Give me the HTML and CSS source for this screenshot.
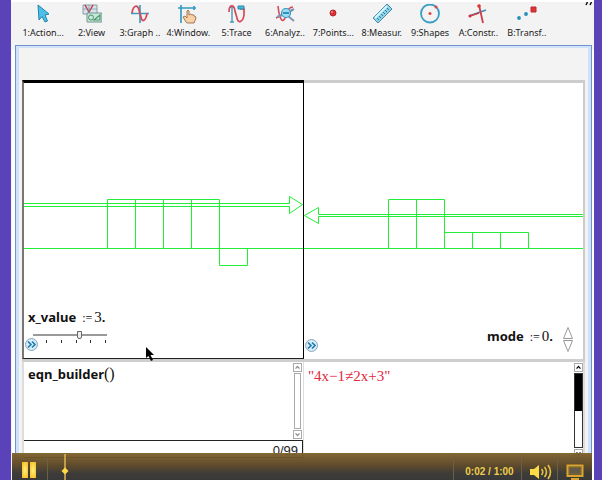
FILE: index.html
```
<!DOCTYPE html>
<html lang="en">
<head>
<meta charset="utf-8">
<title>Equation builder</title>
<link rel="stylesheet" href="styles.css">
</head>
<body>
<div class="app">
  <nav class="toolbar" aria-label="Graph tools">
    <button class="tool"><svg viewBox="0 0 20 20"><path d="M5 1 L6 16 L9 12.500 L12 18 L14.500 17 L12 11 L16 10 Z" fill="#4cc0ea" stroke="#2382a8" stroke-width="1"/></svg><span>1:Action...</span></button>
    <button class="tool"><svg viewBox="0 0 20 20"><path d="M1 1H15V10H1Z" fill="#d6e3e8" stroke="#8a9ca6"/><path d="M3 1L7 8L11 1" fill="none" stroke="#cc3848" stroke-width="1.500"/><path d="M1 5H15M7 1V10" stroke="#7896a8" stroke-width=".7"/><path d="M5 9H20V18H5Z" fill="#c8e6da" stroke="#759595"/><circle cx="9" cy="13.500" r="2.500" fill="none" stroke="#499767"/><path d="M12 16L18 11V16Z" fill="none" stroke="#499767" stroke-width="1.200"/></svg><span>2:View</span></button>
    <button class="tool"><svg viewBox="0 0 20 20"><path d="M1 9.500H19M10 1V19" stroke="#399fc6" stroke-width="1.700"/><path d="M2 9C3 1 8 0 9 6L11 13C12 19 16 17 17 9" fill="none" stroke="#d84957" stroke-width="1.800"/></svg><span>3:Graph ..</span></button>
    <button class="tool"><svg viewBox="0 0 20 20"><path d="M0 4H18M3 1V19M16 2V6" fill="none" stroke="#349cc3" stroke-width="1.700"/><path d="M8 18L5 13L7 12L9 14V7Q10 5 11 7V11Q13 9 14 11Q16 10 16 12Q18 12 18 14L16 19H9Z" fill="#f8d2a6" stroke="#9c6b45" stroke-width=".9"/></svg><span>4:Window.</span></button>
    <button class="tool"><svg viewBox="0 0 20 20"><path d="M5 3V18M3 3H7M3 18H7" stroke="#429bb9" stroke-width="1.400"/><path d="M2 8C2 0 7 0 8 7L10 14C11 20 16 18 17 11V5H13" fill="none" stroke="#d84957" stroke-width="1.700"/><path d="M11 2H17V5H11Z" fill="#48b9dc" stroke="#2789a9"/></svg><span>5:Trace</span></button>
    <button class="tool"><svg viewBox="0 0 20 20"><path d="M3 2C5 20 9 19 11 11Q13 3 18 3M1 14L18 6" fill="none" stroke="#d84957" stroke-width="1.600"/><path d="M2 13L19 5M13 12L19 17" stroke="#8295b5" stroke-width="2"/><circle cx="11" cy="9" r="4.500" fill="#9bdcf0" stroke="#3797c4" stroke-width="1.200"/><path d="M8 9H14" stroke="#2489b9" stroke-width="1.800"/></svg><span>6:Analyz..</span></button>
    <button class="tool"><svg viewBox="0 0 20 20"><circle cx="10" cy="9" r="3" fill="#d83237" stroke="#b32431"/><circle cx="9" cy="8" r="1" fill="#ff8b83"/></svg><span>7:Points...</span></button>
    <button class="tool"><svg viewBox="0 0 20 20"><path d="M1 14L15 0L20 5L6 19Z" fill="#8bd2e9" stroke="#478ba8"/><path d="M3 14L15 2" stroke="#d4f5ff" stroke-width="2"/><path d="M7 16L5 14M9 14L7 12M11 12L9 10M13 10L11 8M15 8L13 6M17 6L15 4" stroke="#347590"/></svg><span>8:Measur.</span></button>
    <button class="tool"><svg viewBox="0 0 20 20"><circle cx="10" cy="9.500" r="9" fill="none" stroke="#3a9dc4" stroke-width="1.800"/><circle cx="10" cy="9.500" r="1.500" fill="#df4545"/><circle cx="16" cy="3" r="1.500" fill="#df4545"/></svg><span>9:Shapes</span></button>
    <button class="tool"><svg viewBox="0 0 20 20"><path d="M1 12L18 6" stroke="#3a8fb4" stroke-width="1.600"/><path d="M2 12L11 9M11 1L15 19" stroke="#cf3d4b" stroke-width="1.800"/><circle cx="2" cy="12" r="1.500" fill="#d52f3c"/><circle cx="11" cy="2" r="1.800" fill="#df3434"/></svg><span>A:Constr..</span></button>
    <button class="tool"><svg viewBox="0 0 20 20"><circle cx="2" cy="14" r="1.900" fill="#298fb8"/><circle cx="9" cy="10" r="1.900" fill="#298fb8"/><path d="M14 3H19V8H14Z" fill="#df3434" stroke="#bd2630"/></svg><span>B:Transf..</span></button>
    <svg class="more" viewBox="0 0 8 4"><path d="M2.500 0L1 3M6.500 0L5 3" stroke="#111" stroke-width="1.500"/></svg>
  </nav>

  <main class="document">
    <div class="panes">
      <section class="graph active">
        <svg class="plot" viewBox="24 83 279 275">
          <path d="M24 203.500H289.500V196.500L302.500 204.500L289.500 213.500V206.500H24M24 248.500H303M107.500 248.500V199.500H219.500V265.500H247.500V248.500M135.500 199.500V248.500M163.500 199.500V248.500M191.500 199.500V248.500"/>
        </svg>
        <div class="variable x-variable">
          <label class="equation" for="xval"><b>x_value</b><i>:=</i><span>3</span><b>.</b></label>
          <div class="slide">
            <input id="xval" type="range" min="0" max="5" step="any" value="3.2">
            <div class="ticks"><i></i><i></i><i></i><i></i><i></i></div>
          </div>
        </div>
        <button class="expand" aria-label="Show entry line"><svg viewBox="0 0 13 13"><circle cx="6.500" cy="6.500" r="6" fill="#d4ecf8" stroke="#8da5bb"/><path d="M3 3.500L6 6.500L3 9.500M7 3.500L10 6.500L7 9.500" fill="none" stroke="#217bad" stroke-width="1.600"/></svg></button>
        <svg class="pointer" viewBox="0 0 9 14"><path d="M1 0V11L3.500 9L6 14L8 13L5.500 8H9Z"/></svg>
      </section>
      <section class="graph">
        <svg class="plot" viewBox="304 83 279 275">
          <path d="M583 214.500H318.500V207.500L304.500 215.500L318.500 223.500V216.500H583M304 248.500H583M388.500 248.500V199.500H444.500V248.500M416.500 199.500V248.500M444.500 232.500H528.500V248.500M472.500 232.500V248.500M500.500 232.500V248.500"/>
        </svg>
        <div class="variable mode-variable">
          <span class="equation"><b>mode</b><i>:=</i><span>0</span><b>.</b></span>
          <span class="spinner">
            <button aria-label="Increase mode"><svg viewBox="0 0 10 12"><path d="M5 .5L9.500 11.500H.5Z"/></svg></button>
            <button aria-label="Decrease mode"><svg viewBox="0 0 10 12"><path d="M.5 .5H9.500L5 11.500Z"/></svg></button>
          </span>
        </div>
        <button class="expand" aria-label="Show entry line"><svg viewBox="0 0 13 13"><circle cx="6.500" cy="6.500" r="6" fill="#d4ecf8" stroke="#8da5bb"/><path d="M3 3.500L6 6.500L3 9.500M7 3.500L10 6.500L7 9.500" fill="none" stroke="#217bad" stroke-width="1.600"/></svg></button>
      </section>

      <section class="calculator">
        <div class="entry">
          <p class="command"><b>eqn_builder</b><span>()</span></p>
          <div class="scroll">
            <button aria-label="Scroll up"><svg viewBox="0 0 9 9"><path d="M2 6L4.500 3L7 6"/></svg></button>
            <div class="track"></div>
            <button aria-label="Scroll down"><svg viewBox="0 0 9 9"><path d="M2 3L4.500 6L7 3"/></svg></button>
          </div>
        </div>
        <div class="count">0/99</div>
      </section>
      <section class="result">
        <p class="output">"4x−1≠2x+3"</p>
        <div class="scroll dark">
          <button aria-label="Scroll up"><svg viewBox="0 0 9 9"><path d="M2 6L4.500 3L7 6"/></svg></button>
          <div class="track"><div class="thumb"></div></div>
          <button aria-label="Scroll down"><svg viewBox="0 0 9 9"><path d="M2 3L4.500 6L7 3"/></svg></button>
        </div>
      </section>
    </div>
  </main>

  <footer class="player">
    <button class="pause" aria-label="Pause"><i></i><i></i></button>
    <div class="timeline"><svg viewBox="0 0 10 27"><path d="M5 0V27" stroke="#e0b650" stroke-width="1.500"/><path d="M5 13.500L8.500 17L5 20.500L1.500 17Z" fill="#ffda45"/></svg></div>
    <div class="time">0:02 / 1:00</div>
    <button class="volume" aria-label="Volume"><svg viewBox="0 0 22 16"><path d="M0 5H4L9 1V15L4 11H0Z" fill="#ffdb45"/><path d="M11.500 5Q14 8 11.500 11M14.500 3Q18.500 8 14.500 13M18 1Q23 8 18 15" fill="none" stroke="#e9bf42" stroke-width="1.600"/></svg></button>
    <button class="screen" aria-label="Full screen"><svg viewBox="0 0 18 16"><path d="M1.500 1.500H16.500V12H1.500Z" fill="#625b4a" stroke="#dba52c" stroke-width="2"/><path d="M3.500 3.500H14.500V10H3.500Z" fill="none" stroke="#80642b"/><path d="M5 15H13" stroke="#dba52c" stroke-width="2"/></svg></button>
  </footer>
</div>
</body>
</html>
```
FILE: styles.css
```
* { box-sizing: border-box; }
body { margin: 0; background: #5a42b8; font-family: "Noto Sans", sans-serif; }
button { padding: 0; border: 0; background: none; color: inherit; font: inherit; }
svg { display: block; }
p { margin: 0; }

.app {
  position: relative;
  display: flex;
  flex-direction: column;
  height: 100vh;
  overflow: hidden;
  margin: 0 8px 0 11px;
  border-top: 2px solid #fff;
  background: #f3f3f3;
}

.toolbar {
  position: relative;
  display: grid;
  grid-template-columns: repeat(11, 1fr);
  flex: 0 0 44px;
  padding: 2px 43px 0 8px;
}
.tool { display: flex; flex-direction: column; align-items: center; gap: 2px; min-width: 0; color: #222; font-size: 9px; line-height: 14px; white-space: nowrap; }
.tool > svg { width: 20px; height: 20px; }
.more { position: absolute; top: 0; right: 1px; width: 8px; height: 4px; }

.document {
  flex: 1;
  min-height: 0;
  margin: 0 3px 0 5px;
  padding: 32px 3px 0;
  border: solid #cfe2fc;
  border-width: 2px 3px 0;
  outline: 1px solid #7690c8;
  box-shadow: -4px 4px #fff, 3px 4px #fff;
}
.panes {
  display: grid;
  grid-template-columns: 282fr 281fr;
  grid-template-rows: auto 1fr;
  row-gap: 3px;
  height: 100%;
  background: #cecece;
}
.graph { position: relative; background: #fff; border: solid #ccc; border-width: 3px 2px 0 0; }
.graph.active { border-color: #000 #000 #222 #777; border-width: 3px 1px 1px 2px; }
.plot { width: 100%; height: auto; }
.plot path { fill: none; stroke: #22ee38; stroke-width: 1; }

.variable { position: absolute; }
.x-variable { left: 4px; bottom: 15px; }
.mode-variable { right: 10px; bottom: 7px; display: flex; align-items: flex-start; gap: 10px; }
.equation { display: flex; align-items: baseline; font-size: 13px; line-height: 18px; color: #111; }
.equation i { margin: 0 2px 0 6px; font: 12px "Liberation Serif", serif; }
.equation span { font: 15px/18px "Liberation Serif", serif; }
.slide { width: 74px; margin: 5px 0 0 5px; }
.slide input { display: block; appearance: none; width: 100%; height: 8px; margin: 0; background: linear-gradient(#999, #999) center / 100% 2px no-repeat; }
.slide input::-webkit-slider-thumb { appearance: none; width: 5px; height: 8px; border: 1px solid #666; border-radius: 0 0 2px 2px; background: #eee; }
.ticks { display: flex; justify-content: space-between; padding: 1px 1px 0 13px; }
.ticks i { width: 1px; height: 3px; background: #333; }
.expand { position: absolute; left: 1px; bottom: 7px; width: 13px; height: 13px; }
.pointer { position: absolute; left: 121px; bottom: -3px; width: 9px; height: 14px; z-index: 1; }
.spinner { display: grid; gap: 1px; }
.spinner svg { width: 10px; height: 12px; fill: #fff; stroke: #999; }

.calculator { display: flex; flex-direction: column; background: #fff; border: solid #ddd; border-width: 0 1px 0 2px; min-height: 0; }
.entry { display: flex; justify-content: space-between; flex: 0 0 78px; padding: 1px 1px 1px 4px; }
.command { padding-top: 1px; font-size: 13px; line-height: 20px; color: #111; }
.command span { font: 16px/20px "Liberation Serif", serif; }
.count { border: solid #222; border-width: 1px 1px 1px 0; height: 18px; padding: 2px 4px 0 0; text-align: right; font: 13px/15px "Liberation Sans", sans-serif; color: #222; }
.result { display: flex; justify-content: space-between; background: #fff; border-right: 2px solid #ddd; min-height: 0; }
.output { padding: 4px 0 0 4px; font: 15px/20px "Liberation Serif", serif; color: #df2940; }

.scroll { display: flex; flex-direction: column; gap: 1px; width: 9px; }
.scroll button svg { width: 9px; height: 9px; border: 1px solid #aaa; fill: none; stroke: #888; stroke-width: 1.5; }
.track { flex: 1; margin: 0 1px; border: 1px solid #aaa; }
.dark { height: 96px; padding-top: 1px; }
.dark button svg { stroke: #000; }
.dark .track { margin: 0; border-color: #333; }
.thumb { height: 50%; background: #000; }

.player {
  position: absolute;
  inset: auto 2px 0 1px;
  display: flex;
  height: 27px;
  border-top: 1px solid #806a30;
  background: linear-gradient(rgba(121, 91, 39, .94), #5e4a2c 45%, #3d3c39 75%, #393939);
}
.player > * + * { border-left: 1px solid #6b6046; }
.pause { display: flex; justify-content: center; align-items: center; gap: 2px; width: 35px; padding: 6px 2px 0 0; }
.pause i { width: 6px; height: 16px; background: radial-gradient(#fff07a, #f5b81c); }
.timeline { flex: 1; padding-left: 12px; }
.timeline svg { width: 10px; height: 27px; }
.time { width: 68px; padding: 10px 0 0 4px; text-align: center; font: bold 10px/16px "Liberation Sans", sans-serif; color: #f1cd49; }
.volume { width: 36px; padding: 9px 0 0 8px; }
.volume svg { width: 22px; height: 16px; }
.screen { width: 35px; padding: 10px 0 0 8px; }
.screen svg { width: 18px; height: 16px; }
```
